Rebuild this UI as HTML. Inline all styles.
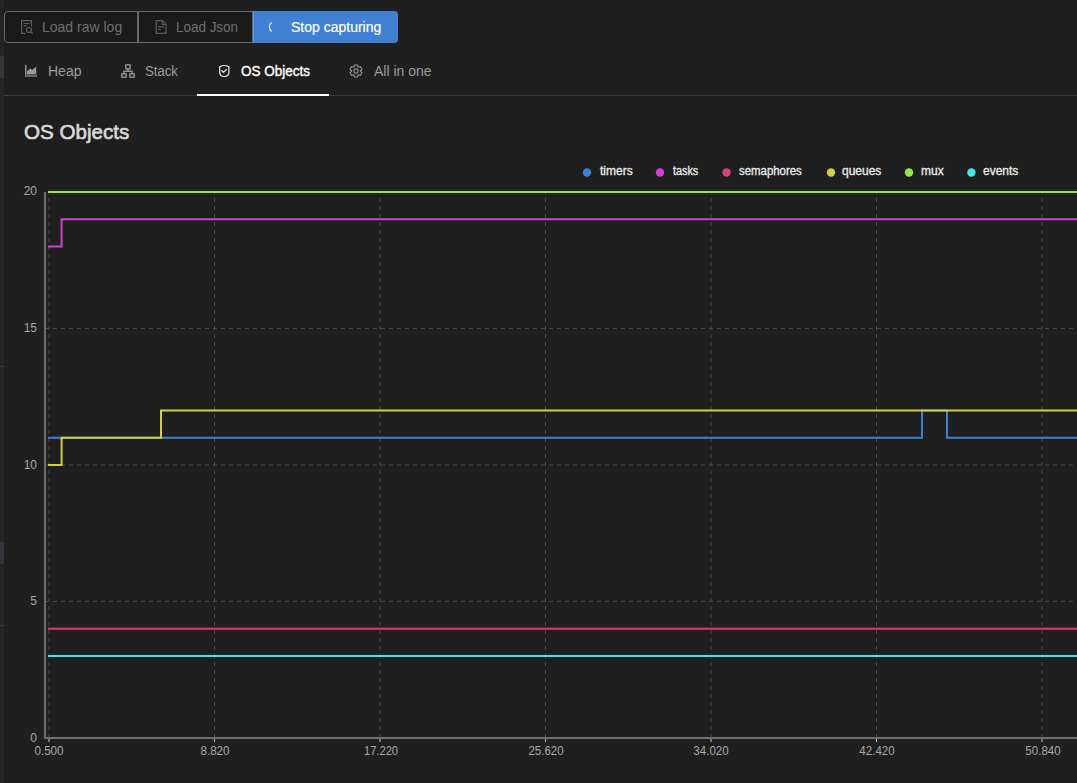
<!DOCTYPE html>
<html><head><meta charset="utf-8">
<style>
html,body{margin:0;padding:0;}
body{width:1077px;height:783px;overflow:hidden;background:#1f1f1f;position:relative;font-family:"Liberation Sans",sans-serif;}
.abs{position:absolute;}
.strip{left:0;top:0;width:4px;height:783px;background:#242424;}
.stripedge{left:4px;top:0;width:1px;height:783px;background:#1d1d1d;}
.t{position:absolute;white-space:nowrap;line-height:1;}
.btn{position:absolute;top:11px;height:32px;box-sizing:border-box;}
.b1{left:4px;width:134px;border:1px solid #6a6a6a;border-radius:4px 0 0 4px;background:#1a1a1a;}
.b2{left:138px;width:115px;border:1px solid #6a6a6a;border-left-width:1px;background:#1a1a1a;}
.b3{left:253px;width:145px;background:#3f80d3;border-radius:0 4px 4px 0;box-shadow:inset 1px 0 0 #5a9ae2;}
.dis{color:#707070;font-size:14px;}
.tab{color:#9c9c9c;font-size:14px;}
.axl{color:#a9a9a9;font-size:12px;}
.leg{color:#ececec;font-size:12px;-webkit-text-stroke:0.3px #ececec;}
</style></head>
<body>
<div class="abs strip"></div>
<div class="abs stripedge"></div>
<div class="abs" style="left:0;top:56px;width:4px;height:22px;background:#35353c;"></div>
<div class="abs" style="left:0;top:542px;width:4px;height:22px;background:#35353c;"></div>
<div class="abs" style="left:0;top:366px;width:4px;height:1px;background:#3a3a3a;"></div>
<div class="abs" style="left:0;top:625px;width:4px;height:1px;background:#3a3a3a;"></div>

<!-- buttons -->
<div class="btn b1"></div>
<div class="btn b2"></div>
<div class="btn b3"></div>
<svg class="abs" style="left:0;top:0" width="420" height="50">
  <!-- doc search icon -->
  <g fill="none" stroke="#5e5e5e" stroke-width="1.2">
    <path d="M25.5 33.4 H21.6 V20.6 H31.4 V26.5"/>
    <path d="M23.6 23.5 H29.8 M23.6 25.8 H26.6"/>
    <circle cx="28.9" cy="30" r="2.5" stroke-width="1.1"/>
    <path d="M30.7 31.8 L32.8 33.9" stroke-width="1.1"/>
  </g>
  <!-- file icon -->
  <g fill="none" stroke="#5e5e5e" stroke-width="1.2" stroke-linejoin="round">
    <path d="M156.2 20.6 H162.6 L166 24.2 V33.4 H156.2 Z"/>
    <path d="M162.3 20.8 V24.5 H165.8"/>
    <path d="M158.2 26.9 H163.8 M158.2 29.5 H160.8"/>
  </g>
  <!-- spinner arc -->
  <path d="M271.5 22.5 A6 6 0 0 0 271.5 31.5" fill="none" stroke="#e8eef8" stroke-width="1.3"/>
</svg>
<div class="t dis" style="left:42px;top:20px;">Load raw log</div>
<div class="t dis" style="left:176px;top:20px;transform:scaleX(0.96);transform-origin:0 0;">Load Json</div>
<div class="t" style="left:291px;top:20px;color:#fff;font-size:14px;-webkit-text-stroke:0.2px #fff;">Stop capturing</div>

<!-- tabs -->
<div class="abs" style="left:4px;top:95px;width:1073px;height:1px;background:#3b3b3b;"></div>
<div class="abs" style="left:197px;top:94px;width:132px;height:2px;background:#ffffff;"></div>
<svg class="abs" style="left:0;top:50px" width="450" height="40">
  <!-- area chart icon -->
  <g>
    <rect x="25" y="15" width="1.5" height="12" fill="#939393"/>
    <rect x="25" y="24.6" width="12" height="2.2" fill="#6c6c6c"/>
    <path d="M27 24.3 V21.2 L30.2 18.4 L32.2 20 L36.2 16.5 V24.3 Z" fill="#9a9a9a"/>
  </g>
  <!-- sitemap icon -->
  <g fill="none" stroke="#8e8e8e" stroke-width="1.5">
    <rect x="125.75" y="14.65" width="4.4" height="4.1" rx="0.6"/>
    <rect x="121.75" y="23.75" width="4.4" height="3.6" rx="0.6"/>
    <rect x="129.85" y="23.75" width="4.4" height="3.6" rx="0.6"/>
    <path d="M127.95 18.8 V21.2 M123.9 23.2 V21.2 H132 V23.2"/>
  </g>
  <!-- shield check -->
  <g fill="none" stroke="#f2f2f2" stroke-width="1.2" stroke-linejoin="round" stroke-linecap="round">
    <path d="M219.7 16.8 Q224.3 14.2 228.9 16.8 V22.3 C228.9 25.3 227 26.5 224.3 26.5 C221.6 26.5 219.7 25.3 219.7 22.3 Z"/>
    <path d="M221.8 20.7 L223.6 22.4 L226.5 19.4"/>
  </g>
  <!-- gear -->
  <g fill="none" stroke="#8e8e8e" stroke-width="1.2" stroke-linejoin="round">
    <circle cx="356" cy="21" r="2.1"/>
    <path d="M353.96 16.99 L354.50 14.98 L357.50 14.98 L358.04 16.99 L358.45 17.23 L360.46 16.69 L361.96 19.29 L360.49 20.76 L360.49 21.24 L361.96 22.71 L360.46 25.31 L358.45 24.77 L358.04 25.01 L357.50 27.02 L354.50 27.02 L353.96 25.01 L353.55 24.77 L351.54 25.31 L350.04 22.71 L351.51 21.24 L351.51 20.76 L350.04 19.29 L351.54 16.69 L353.55 17.23 Z"/>
  </g>
</svg>
<div class="t tab" style="left:48px;top:64px;">Heap</div>
<div class="t tab" style="left:145px;top:64px;transform:scaleX(0.94);transform-origin:0 0;">Stack</div>
<div class="t" style="left:241px;top:64px;color:#fff;font-size:14px;-webkit-text-stroke:0.35px #fff;transform:scaleX(0.965);transform-origin:0 0;">OS Objects</div>
<div class="t tab" style="left:374px;top:64px;">All in one</div>

<!-- title -->
<div class="t" style="left:24px;top:121px;color:#d9d9d9;font-size:21px;-webkit-text-stroke:0.65px #d9d9d9;transform:scaleX(0.98);transform-origin:0 0;">OS Objects</div>

<!-- legend -->
<svg class="abs" style="left:0;top:160px" width="1077" height="25">
  <circle cx="587" cy="12.5" r="4.2" fill="#4080d4"/>
  <circle cx="660" cy="12.5" r="4.2" fill="#d040d4"/>
  <circle cx="726.5" cy="12.5" r="4.2" fill="#d44080"/>
  <circle cx="831" cy="12.5" r="4.2" fill="#d0d040"/>
  <circle cx="909" cy="12.5" r="4.2" fill="#90e84a"/>
  <circle cx="971.4" cy="12.5" r="4.2" fill="#40e8e8"/>
</svg>
<div class="t leg" style="left:600px;top:165px;">timers</div>
<div class="t leg" style="left:673px;top:165px;transform:scaleX(0.9);transform-origin:0 0;">tasks</div>
<div class="t leg" style="left:739px;top:165px;transform:scaleX(0.95);transform-origin:0 0;">semaphores</div>
<div class="t leg" style="left:842px;top:165px;">queues</div>
<div class="t leg" style="left:921px;top:165px;">mux</div>
<div class="t leg" style="left:983px;top:165px;">events</div>

<!-- chart -->
<svg class="abs" style="left:0;top:0" width="1077" height="783">
  <g stroke="#4a4a4a" stroke-width="1" stroke-dasharray="4 4" fill="none">
    <path d="M45 328.5 H1077 M45 465 H1077 M45 601.5 H1077"/>
    <path d="M49 192 V737 M214.5 192 V737 M380 192 V737 M545.5 192 V737 M711 192 V737 M876.5 192 V737 M1042 192 V737" stroke-dashoffset="2"/>
  </g>
  <g fill="none" stroke="#6e6e6e" stroke-width="2">
    <path d="M45 192 V738 H1077"/>
  </g>
  <g stroke="#c8c8c8" stroke-width="1">
    <path d="M49 739 V742 M214.5 739 V742 M380 739 V742 M545.5 739 V742 M711 739 V742 M876.5 739 V742 M1042 739 V742"/>
  </g>
  <g fill="none" stroke-width="2" stroke-linejoin="miter">
    <path stroke="#4080d4" d="M48 437.7 H922 V410.4 H947 V437.7 H1077"/>
    <path stroke="#d040d4" d="M48 246.6 H61.6 V219.3 H1077"/>
    <path stroke="#d44080" d="M48 628.8 H1077"/>
    <path stroke="#d0d040" d="M48 465 H61.6 V437.7 H161 V410.4 H1077"/>
    <path stroke="#90e84a" d="M48 192 H1077"/>
    <path stroke="#40e8e8" d="M48 656 H1077"/>
  </g>
</svg>
<div class="t axl" style="left:0;width:37px;text-align:right;top:185.0px;">20</div>
<div class="t axl" style="left:0;width:37px;text-align:right;top:322.0px;">15</div>
<div class="t axl" style="left:0;width:37px;text-align:right;top:458.5px;">10</div>
<div class="t axl" style="left:0;width:37px;text-align:right;top:595.0px;">5</div>
<div class="t axl" style="left:0;width:37px;text-align:right;top:731.5px;">0</div>
<div class="t axl" style="left:9.0px;width:80px;text-align:center;top:745px;transform:scaleX(0.97);">0.500</div>
<div class="t axl" style="left:174.5px;width:80px;text-align:center;top:745px;transform:scaleX(0.97);">8.820</div>
<div class="t axl" style="left:340.5px;width:80px;text-align:center;top:745px;transform:scaleX(0.93);">17.220</div>
<div class="t axl" style="left:506.0px;width:80px;text-align:center;top:745px;transform:scaleX(0.96);">25.620</div>
<div class="t axl" style="left:671.2px;width:80px;text-align:center;top:745px;transform:scaleX(0.96);">34.020</div>
<div class="t axl" style="left:836.5px;width:80px;text-align:center;top:745px;transform:scaleX(0.96);">42.420</div>
<div class="t axl" style="left:1002.5px;width:80px;text-align:center;top:745px;transform:scaleX(0.96);">50.840</div>
</body></html>
